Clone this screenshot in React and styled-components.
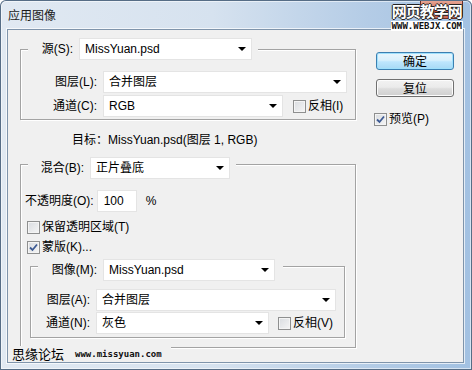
import React from 'react'
import styled, { createGlobalStyle } from 'styled-components'

const GlobalStyle = createGlobalStyle`
  html, body {
    margin: 0;
    padding: 0;
    background: #fff;
  }
  body {
    font-family: "Liberation Sans", "Noto Sans CJK SC", sans-serif;
    font-size: 12px;
    line-height: 14px;
    color: #000;
  }
`

const Window = styled.div`
  position: relative;
  width: 472px;
  height: 370px;
  box-sizing: border-box;
  padding: 0 8px 7px 7px;
  display: flex;
  flex-direction: column;
  border-radius: 6px 6px 0 0;
  overflow: hidden;
  background: linear-gradient(to right, #e1e9f2 0%, #d6e2ef 45%, #b4cce6 78%, #a2c1e2 100%);
  box-shadow: inset 0 0 0 1px #566d86, inset 0 0 0 2px rgba(255, 255, 255, 0.55);
`

const TitleBar = styled.div`
  height: 29px;
  flex: none;
  display: flex;
  justify-content: space-between;
  align-items: flex-start;
`

const Title = styled.div`
  padding: 8px 0 0 1px;
  font-family: "Noto Sans CJK SC", sans-serif;
  color: #1a1a1a;
`

const CloseButton = styled.div`
  width: 43px;
  height: 18px;
  margin-right: 1px;
  margin-top: 1px;
  box-sizing: border-box;
  border: 1px solid #6b2e24;
  border-top: none;
  border-radius: 0 0 4px 4px;
  background: linear-gradient(#e6a593 0%, #d77a66 45%, #c2442d 55%, #d0705c 100%);
  display: flex;
  align-items: center;
  justify-content: center;
`

const Client = styled.div`
  position: relative;
  flex: 1;
  box-sizing: border-box;
  background: #f0f0f0;
  border: 1px solid #7f94ab;
  box-shadow: 0 0 0 1px rgba(255, 255, 255, 0.7);
  display: grid;
  grid-template-columns: 336px 78px;
  column-gap: 20px;
  align-items: start;
  padding: 19px 0 0 12px;
`

const Column = styled.div`
  display: flex;
  flex-direction: column;
`

const Group = styled.div`
  display: flex;
  flex-direction: column;
  border: 1px solid #a3a3a3;
  box-shadow: inset 1px 1px 0 #fff, 1px 1px 0 #fff;
  margin: ${(p) => p.$margin || '0'};
  padding-bottom: ${(p) => p.$pb || 0}px;
`

const Legend = styled.div`
  align-self: flex-start;
  display: flex;
  align-items: center;
  gap: 6px;
  margin: ${(p) => p.$mt}px 0 0 7px;
  padding-right: ${(p) => p.$pr || 6}px;
  background: #f0f0f0;
`

const Label = styled.div`
  width: ${(p) => p.$w}px;
  flex: none;
  text-align: right;
  white-space: nowrap;
`

const Row = styled.div`
  display: flex;
  align-items: center;
  gap: 6px;
  margin-top: ${(p) => p.$mt || 0}px;
`

const Select = styled.div`
  width: ${(p) => p.$w}px;
  height: 22px;
  flex: none;
  box-sizing: border-box;
  background: #fff;
  border: 1px solid #e4e4e4;
  padding: 0 5px 0 5px;
  display: flex;
  align-items: center;
  justify-content: space-between;
  white-space: nowrap;
`

const Arrow = styled.span`
  width: 0;
  height: 0;
  border-left: 4px solid transparent;
  border-right: 4px solid transparent;
  border-top: 4px solid #000;
`

const Input = styled.div`
  width: 40px;
  height: 22px;
  box-sizing: border-box;
  background: #fff;
  border: 1px solid #e4e4e4;
  padding-left: 6px;
  display: flex;
  align-items: center;
`

const Percent = styled.span`
  margin-left: 6px;
`

const CheckRow = styled.label`
  display: flex;
  align-items: center;
  gap: 2px;
  height: 20px;
  margin: ${(p) => p.$margin || '0'};
  white-space: nowrap;
`

const Box = styled.span`
  width: 13px;
  height: 13px;
  flex: none;
  box-sizing: border-box;
  border: 1px solid #8e8f8f;
  background: linear-gradient(135deg, #d9dce0 0%, #f5f5f5 100%);
  box-shadow: inset 0 0 0 1px #f4f4f4;
  display: flex;
  align-items: center;
  justify-content: center;
`

const Target = styled.div`
  margin: 13px 0 0 52px;
  white-space: nowrap;
`

const OpacityRow = styled.div`
  display: flex;
  align-items: center;
  gap: 3px;
  margin-top: 11px;
  padding-left: 4px;
`

const Buttons = styled.div`
  margin-top: 3px;
  display: flex;
  flex-direction: column;
  gap: 9px;
`

const Button = styled.div`
  height: 18px;
  box-sizing: border-box;
  border-radius: 3px;
  display: flex;
  align-items: center;
  justify-content: center;
  font-family: "Noto Sans CJK SC", sans-serif;
  border: 1px solid ${(p) => (p.$primary ? '#3c7fb1' : '#707070')};
  background: ${(p) =>
    p.$primary
      ? 'linear-gradient(#eaf6fd 0%, #d9f0fc 45%, #bee6fd 55%, #a7d9f5 100%)'
      : 'linear-gradient(#f2f2f2 0%, #ebebeb 45%, #dddddd 55%, #cfcfcf 100%)'};
  box-shadow: inset 0 0 0 1px ${(p) => (p.$primary ? '#9fe0fc' : '#fcfcfc')};
`

const TopMark = styled.div`
  position: absolute;
  top: 1px;
  right: 9px;
  display: flex;
  flex-direction: column;
  align-items: center;
  gap: 1px;
`

const TopMarkCn = styled.div`
  font-family: "Noto Sans CJK SC", sans-serif;
  font-size: 15px;
  line-height: 19px;
  height: 19px;
  font-weight: bold;
  letter-spacing: -1px;
  color: #fff;
  text-shadow: 1px 0 0 #222, -1px 0 0 #222, 0 1px 0 #222, 0 -1px 0 #222;
`

const MonoMark = styled.span`
  display: block;
  font-family: "DejaVu Sans Mono", monospace;
  font-size: 9px;
  line-height: 10px;
  height: 10px;
  font-weight: bold;
  color: #111;
  background: ${(p) => p.$bg || 'transparent'};
  padding: 0 1px;
`

const BottomMark = styled.div`
  position: absolute;
  left: 1px;
  bottom: 0;
  height: 16px;
  display: flex;
  align-items: center;
  gap: 10px;
  padding: 0 8px 0 3px;
  background: #f0f0f0;
`

const BottomMarkCn = styled.span`
  font-family: "Noto Sans CJK SC", sans-serif;
  font-size: 13px;
`

const Check = () => (
  <svg width="9" height="9" viewBox="0 0 9 9">
    <path d="M1 4.5 L3.5 7 L8 1.5" fill="none" stroke="#3d5a93" strokeWidth="1.8" />
  </svg>
)

const Checkbox = ({ checked, children, margin }) => (
  <CheckRow $margin={margin}>
    <Box>{checked && <Check />}</Box>
    {children}
  </CheckRow>
)

const Dropdown = ({ w, children }) => (
  <Select $w={w}>
    <span>{children}</span>
    <Arrow />
  </Select>
)

export default function App() {
  return (
    <>
      <GlobalStyle />
      <Window>
        <TitleBar>
          <Title>应用图像</Title>
          <CloseButton>
            <svg width="11" height="9" viewBox="0 0 11 9">
              <path d="M1 1 L10 8 M10 1 L1 8" stroke="#fff" strokeWidth="2" />
            </svg>
          </CloseButton>
        </TitleBar>
        <Client>
          <Column>
            <Group $pb={2}>
              <Legend $mt={-12}>
                <Label $w={45}>源(S):</Label>
                <Dropdown w={173}>MissYuan.psd</Dropdown>
              </Legend>
              <Row $mt={11}>
                <Label $w={76}>图层(L):</Label>
                <Dropdown w={244}>合并图层</Dropdown>
              </Row>
              <Row $mt={2}>
                <Label $w={76}>通道(C):</Label>
                <Dropdown w={180}>RGB</Dropdown>
                <Checkbox margin="0 0 0 4px">反相(I)</Checkbox>
              </Row>
            </Group>

            <Target>目标：MissYuan.psd(图层 1, RGB)</Target>

            <Group $margin="17px 0 0 0">
              <Legend $mt={-8}>
                <Label $w={56}>混合(B):</Label>
                <Dropdown w={140}>正片叠底</Dropdown>
              </Legend>
              <OpacityRow>
                <span>不透明度(O):</span>
                <Input>100</Input>
                <Percent>%</Percent>
              </OpacityRow>
              <Checkbox margin="5px 0 0 6px">保留透明区域(T)</Checkbox>
              <Checkbox checked margin="0 0 0 6px">蒙版(K)...</Checkbox>

              <Group $margin="9px 10px 9px 9px" $pb={3}>
                <Legend $mt={-8} $pr={8}>
                  <Label $w={59}>图像(M):</Label>
                  <Dropdown w={172}>MissYuan.psd</Dropdown>
                </Legend>
                <Row $mt={8}>
                  <Label $w={59}>图层(A):</Label>
                  <Dropdown w={240}>合并图层</Dropdown>
                </Row>
                <Row $mt={1}>
                  <Label $w={59}>通道(N):</Label>
                  <Dropdown w={173}>灰色</Dropdown>
                  <Checkbox margin="0 0 0 3px">反相(V)</Checkbox>
                </Row>
              </Group>
            </Group>
          </Column>

          <Buttons>
            <Button $primary>确定</Button>
            <Button>复位</Button>
            <Checkbox checked margin="3px 0 0 -2px">预览(P)</Checkbox>
          </Buttons>

          <BottomMark>
            <BottomMarkCn>思缘论坛</BottomMarkCn>
            <MonoMark>www.missyuan.com</MonoMark>
          </BottomMark>
        </Client>
        <TopMark>
          <TopMarkCn>网页教学网</TopMarkCn>
          <MonoMark $bg="#fff">WWW.WEBJX.COM</MonoMark>
        </TopMark>
      </Window>
    </>
  )
}
